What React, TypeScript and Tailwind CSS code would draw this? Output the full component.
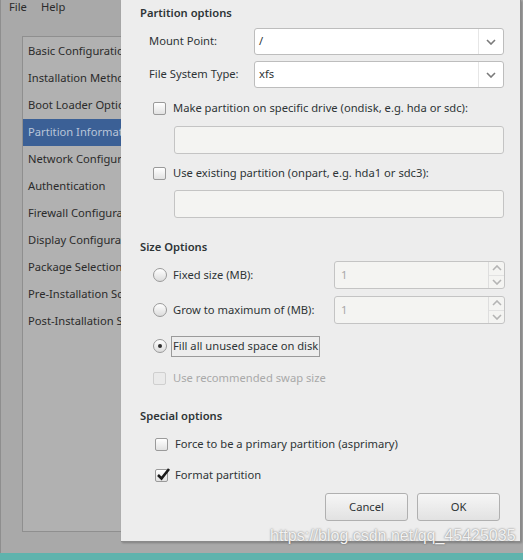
import { ReactNode } from 'react';

const font = { fontFamily: '"Noto Sans", "DejaVu Sans", sans-serif' };

const navItems = [
  'Basic Configuration',
  'Installation Method',
  'Boot Loader Options',
  'Partition Information',
  'Network Configuration',
  'Authentication',
  'Firewall Configuration',
  'Display Configuration',
  'Package Selection',
  'Pre-Installation Script',
  'Post-Installation Script',
];

const ChevronDown = ({ className = '' }: { className?: string }) => (
  <svg width="10" height="6" viewBox="0 0 10 6" className={className}>
    <path d="M1 1 L5 5 L9 1" fill="none" stroke="currentColor" strokeWidth="1.6" />
  </svg>
);

const ChevronUp = ({ className = '' }: { className?: string }) => (
  <svg width="10" height="6" viewBox="0 0 10 6" className={className}>
    <path d="M1 5 L5 1 L9 5" fill="none" stroke="currentColor" strokeWidth="1.6" />
  </svg>
);

const Check = ({ checked = false, disabled = false }: { checked?: boolean; disabled?: boolean }) => (
  <span
    className={
      'relative inline-block w-[13px] h-[13px] rounded-[2px] border shrink-0 ' +
      (disabled ? 'border-[#cfcfcf] bg-[#eaeaea]' : 'border-[#9a9a9a] bg-gradient-to-b from-white to-[#e2e2e2]')
    }
  >
    {checked && (
      <svg width="15" height="14" viewBox="0 0 15 14" className="absolute left-[0px] top-[-3px]">
        <path d="M2 8 L5.5 11.5 L13 2" fill="none" stroke="#1a1a1a" strokeWidth="2.6" />
      </svg>
    )}
  </span>
);

const Radio = ({ checked = false }: { checked?: boolean }) => (
  <span className="flex items-center justify-center w-[14px] h-[14px] rounded-full border border-[#9a9a9a] bg-gradient-to-b from-white to-[#dcdcdc] shrink-0">
    {checked && <span className="w-[4px] h-[4px] rounded-full bg-[#2e2e2e]" />}
  </span>
);

const Combo = ({ value }: { value: string }) => (
  <div className="flex h-[27px] w-[250px] rounded-[3px] border border-[#bdbdbd] bg-white">
    <span className="flex-1 flex items-center pl-[4px] text-[#2e3436]">{value}</span>
    <span className="flex items-center justify-center w-[25px] border-l border-[#e6e6e6] text-[#7a7a7a]">
      <ChevronDown />
    </span>
  </div>
);

const Spin = () => (
  <div className="flex h-[28px] w-[171px] rounded-[3px] border border-[#c4c4c4] bg-[#f4f4f2]">
    <span className="flex-1 flex items-center pl-[6px] text-[#a8a8a8]">1</span>
    <span className="flex flex-col w-[16px] border-l border-[#dedede] text-[#b4b4b4]">
      <span className="flex-1 flex items-center justify-center border-b border-[#e2e2e2]">
        <ChevronUp />
      </span>
      <span className="flex-1 flex items-center justify-center">
        <ChevronDown />
      </span>
    </span>
  </div>
);

const Field = ({ className = '' }: { className?: string }) => (
  <div className={'ml-[34px] h-[28px] w-[330px] rounded-[3px] border border-[#c4c4c4] bg-[#f4f4f2] ' + className} />
);

const Row = ({ children, className = '' }: { children: ReactNode; className?: string }) => (
  <div className={'flex items-center text-[11.2px] text-[#2e3436] ' + className}>{children}</div>
);

const Heading = ({ children, className = '' }: { children: ReactNode; className?: string }) => (
  <div className={'text-[11.2px] font-semibold text-[#2e3436] h-[17px] flex items-center ' + className}>{children}</div>
);

const Button = ({ children }: { children: ReactNode }) => (
  <div className="flex items-center justify-center w-[83px] h-[28px] rounded-[3px] border border-[#b0b0b0] bg-gradient-to-b from-[#f6f6f6] to-[#e2e2e2] text-[11.2px] text-[#2e3436]">
    {children}
  </div>
);

const App = () => {
  return (
    <div className="relative w-[523px] h-[560px] overflow-hidden bg-[#5fb3ad]" style={font}>
      {/* background window */}
      <div className="h-[553px] bg-[#a9a9a9] border-l border-[#8e8e8e] flex flex-col">
        <div className="flex gap-[14px] pl-[8px] h-[14px] items-start leading-[13px] text-[11.2px] text-[#2b2b2b]">
          <span>File</span>
          <span>Help</span>
        </div>
        <div className="ml-[21px] mt-[22px] w-[140px] h-[496px] border border-[#8f8f8f] bg-[#b1b1b1] pt-[1px] overflow-hidden">
          {navItems.map((item) => (
            <div
              key={item}
              className={
                'h-[27px] flex items-center pl-[5px] whitespace-nowrap text-[11.2px] ' +
                (item === 'Partition Information' ? 'bg-[#3b6096] text-[#b9c6d9]' : 'text-[#2b2b2b]')
              }
            >
              {item}
            </div>
          ))}
        </div>
      </div>

      {/* dialog */}
      <div className="absolute left-[121px] top-0 w-[400px] h-[542px] bg-[#ededed] border-r border-b border-[#8a8a8a] shadow-[1px_1px_2px_rgba(0,0,0,0.25)] pl-[19px] pt-[5px]">
        <Heading>Partition options</Heading>

        <Row className="mt-[6px] h-[27px] gap-[8px]">
          <span className="ml-[9px] w-[97px]">Mount Point:</span>
          <Combo value="/" />
        </Row>
        <Row className="mt-[6px] h-[27px] gap-[8px]">
          <span className="ml-[9px] w-[97px]">File System Type:</span>
          <Combo value="xfs" />
        </Row>

        <Row className="mt-[8px] h-[24px] pl-[13px] gap-[7px]">
          <Check />
          <span>Make partition on specific drive (ondisk, e.g. hda or sdc):</span>
        </Row>
        <Field className="mt-[6px]" />
        <Row className="mt-[7px] h-[24px] pl-[13px] gap-[7px]">
          <Check />
          <span>Use existing partition (onpart, e.g. hda1 or sdc3):</span>
        </Row>
        <Field className="mt-[5px]" />

        <Heading className="mt-[21px]">Size Options</Heading>

        <Row className="mt-[5px] h-[28px] pl-[13px] gap-[6px]">
          <Radio />
          <span className="w-[155px]">Fixed size (MB):</span>
          <Spin />
        </Row>
        <Row className="mt-[7px] h-[28px] pl-[13px] gap-[6px]">
          <Radio />
          <span className="w-[155px]">Grow to maximum of (MB):</span>
          <Spin />
        </Row>
        <Row className="mt-[10px] h-[24px] pl-[13px] gap-[4px]">
          <Radio checked />
          <span className="border border-[#9a9a9a] px-[1px] h-[21px] flex items-center">Fill all unused space on disk</span>
        </Row>
        <Row className="mt-[8px] h-[24px] pl-[13px] gap-[7px]">
          <Check disabled />
          <span className="text-[#a9a9a9]">Use recommended swap size</span>
        </Row>

        <Heading className="mt-[18px]">Special options</Heading>

        <Row className="mt-[7px] h-[24px] pl-[15px] gap-[7px]">
          <Check />
          <span>Force to be a primary partition (asprimary)</span>
        </Row>
        <Row className="mt-[7px] h-[24px] pl-[15px] gap-[7px]">
          <Check checked />
          <span>Format partition</span>
        </Row>

        <div className="mt-[6px] flex justify-end gap-[9px] pr-[20px]">
          <Button>Cancel</Button>
          <Button>OK</Button>
        </div>
      </div>

      {/* watermark */}
      <div
        className="absolute left-[270px] top-[526px] text-[16px] leading-[20px] text-[#f2f2f2] whitespace-nowrap [text-shadow:0_0_2px_rgba(90,90,90,0.9)]"
        style={{ fontFamily: '"Liberation Sans", Arial, sans-serif' }}
      >
        https://blog.csdn.net/qq_45425035
      </div>
    </div>
  );
};

export default App;
